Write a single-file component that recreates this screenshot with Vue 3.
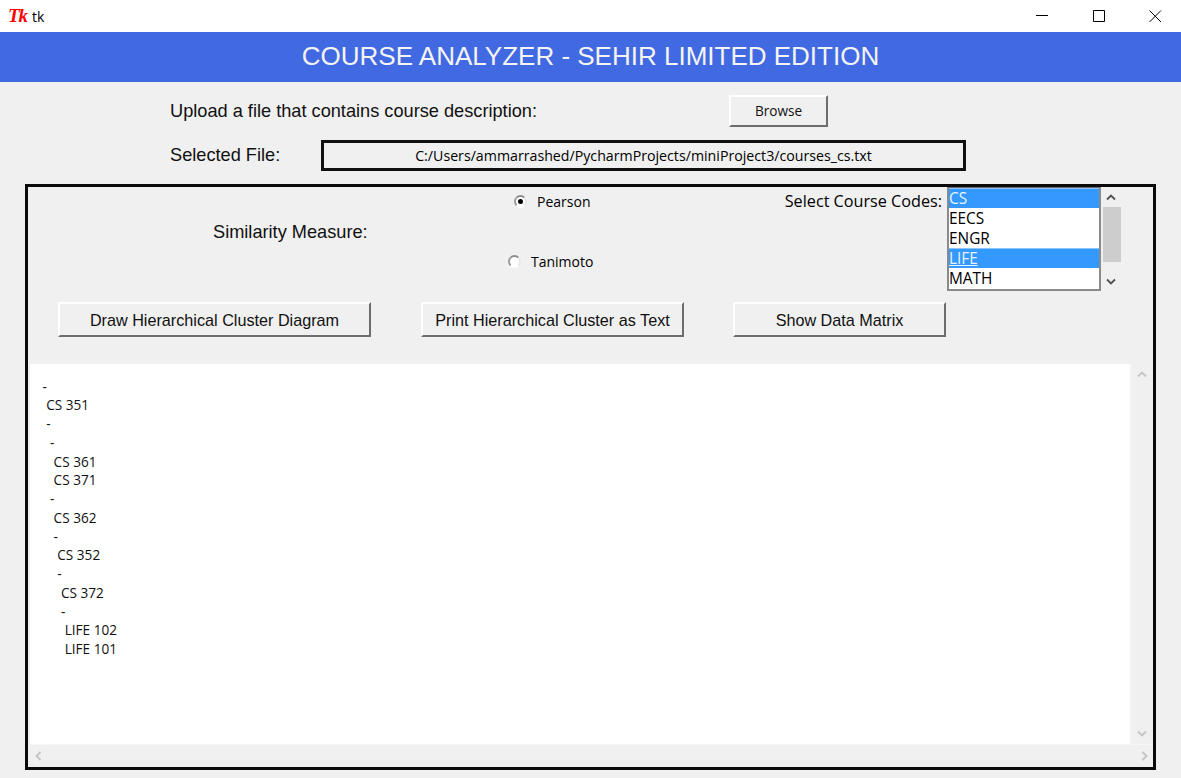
<script setup>
const courseCodes = [
  { name: 'CS', selected: true },
  { name: 'EECS' },
  { name: 'ENGR' },
  { name: 'LIFE', selected: true, active: true },
  { name: 'MATH' }
]

// depth = how many spaces tk printed before the line
const clusterLines = [
  ['-', 0], ['CS 351', 1], ['-', 1], ['-', 2], ['CS 361', 3], ['CS 371', 3],
  ['-', 2], ['CS 362', 3], ['-', 3], ['CS 352', 4], ['-', 4], ['CS 372', 5],
  ['-', 5], ['LIFE 102', 6], ['LIFE 101', 6]
]
</script>

<template>
  <div class="window">
    <header class="titlebar">
      <span class="tk-logo">Tk</span>
      <span class="tk-title">tk</span>
      <div class="window-controls">
        <svg width="13" height="13" viewBox="0 0 13 13"><path d="M0 5.5h12" stroke="#000" fill="none"/></svg>
        <svg width="13" height="13" viewBox="0 0 13 13"><path d="M.5.5h11v11H.5z" stroke="#000" fill="none"/></svg>
        <svg width="13" height="13" viewBox="0 0 13 13"><path d="M.5.5l11.5 11.5M12 .5L.5 12" stroke="#000" fill="none"/></svg>
      </div>
    </header>

    <h1 class="banner">COURSE ANALYZER - SEHIR LIMITED EDITION</h1>

    <section class="file-row upload-row">
      <span class="label upload-label">Upload a file that contains course description:</span>
      <button class="tk-btn browse">Browse</button>
    </section>

    <section class="file-row selected-row">
      <span class="label selected-label">Selected File:</span>
      <div class="file-path">C:/Users/ammarrashed/PycharmProjects/miniProject3/courses_cs.txt</div>
    </section>

    <main class="panel">
      <div class="measure-row">
        <span class="label measure-label">Similarity Measure:</span>
        <div class="radios">
          <label class="radio pearson"><span class="radio-dot checked"></span>Pearson</label>
          <label class="radio tanimoto"><span class="radio-dot"></span>Tanimoto</label>
        </div>
        <span class="codes-label">Select Course Codes:</span>
        <ul class="listbox">
          <li v-for="code in courseCodes" :key="code.name" :class="{ selected: code.selected, active: code.active }">{{ code.name }}</li>
        </ul>
        <div class="list-scroll">
          <svg width="10" height="7" viewBox="0 0 10 7"><path d="M1 5.5l4-4 4 4" stroke="#505050" stroke-width="1.8" fill="none"/></svg>
          <div class="list-thumb"></div>
          <svg width="10" height="7" viewBox="0 0 10 7"><path d="M1 1.5l4 4 4-4" stroke="#505050" stroke-width="1.8" fill="none"/></svg>
        </div>
      </div>

      <div class="actions">
        <button class="tk-btn draw">Draw Hierarchical Cluster Diagram</button>
        <button class="tk-btn print">Print Hierarchical Cluster as Text</button>
        <button class="tk-btn matrix">Show Data Matrix</button>
      </div>

      <div class="output">
        <div class="output-text">
          <div
            v-for="(line, i) in clusterLines"
            :key="i"
            class="output-line"
            :style="{ paddingLeft: line[1] * 3.7 + 'px' }"
          >{{ line[0] }}</div>
        </div>
        <div class="v-scroll">
          <svg width="10" height="7" viewBox="0 0 10 7"><path d="M1 5.5l4-4 4 4" stroke="#c4c4c4" stroke-width="1.8" fill="none"/></svg>
          <svg width="10" height="7" viewBox="0 0 10 7"><path d="M1 1.5l4 4 4-4" stroke="#c4c4c4" stroke-width="1.8" fill="none"/></svg>
        </div>
        <div class="h-scroll">
          <svg width="7" height="10" viewBox="0 0 7 10"><path d="M5.5 1l-4 4 4 4" stroke="#c4c4c4" stroke-width="1.8" fill="none"/></svg>
          <svg width="7" height="10" viewBox="0 0 7 10"><path d="M1.5 1l4 4-4 4" stroke="#c4c4c4" stroke-width="1.8" fill="none"/></svg>
        </div>
      </div>
    </main>
  </div>
</template>

<style>
html, body { margin: 0; background: #f0f0f0; }
</style>

<style scoped>
.window {
  width: 1181px;
  height: 778px;
  overflow: hidden;
  background: #f0f0f0;
  color: #000;
  font-family: "Open Sans", "Noto Sans", sans-serif;
  font-size: 14px;
}

.titlebar {
  height: 32px;
  display: flex;
  align-items: center;
  padding-left: 8px;
  background: #fff;
  box-sizing: border-box;
}
.tk-logo {
  width: 24px;
  color: #f00;
  font: italic bold 19px "Liberation Serif", serif;
  letter-spacing: -1px;
}
.tk-title { font-size: 14px; }
.window-controls {
  margin-left: auto;
  display: flex;
  gap: 43.5px;
  padding-right: 19px;
}

.banner {
  margin: 0;
  height: 50px;
  text-align: center;
  background: #4169e1;
  color: #f4f4f4;
  font: 400 26px/49px "Liberation Sans", sans-serif;
}

.label { font: 18.2px "Liberation Sans", sans-serif; color: #111; }

.file-row { display: flex; align-items: center; }
.upload-row { height: 32px; margin-top: 13px; padding-left: 170px; }
.upload-label { width: 559px; }
.browse { width: 99px; height: 32px; }
.selected-row { height: 31px; margin-top: 13px; padding-left: 170px; }
.selected-label { width: 151px; }
.file-path {
  width: 645px;
  height: 31px;
  box-sizing: border-box;
  border: 3px solid #111;
  line-height: 25px;
  font-size: 14.2px;
  text-align: center;
}

.tk-btn {
  box-sizing: border-box;
  padding: 1px 0 0;
  background: #f0f0f0;
  border: 2px solid;
  border-color: #fff #6d6d6d #6d6d6d #fff;
  color: #111;
  font-family: "Liberation Sans", sans-serif;
  font-size: 16.2px;
}
.tk-btn.browse { padding: 0 0 2px; font-family: "Open Sans", sans-serif; font-size: 13.6px; }

.panel {
  width: 1131px;
  height: 586px;
  margin: 13px 0 0 25px;
  box-sizing: border-box;
  border: 3px solid #0a0a0a;
}

.measure-row { display: flex; height: 115px; }
.measure-label { margin: 35px 0 0 185px; width: 290px; height: 24px; }
.radios { width: 280px; }
.radio {
  display: flex;
  align-items: center;
  gap: 10px;
  height: 20px;
}
.pearson { margin: 4px 0 0 11px; }
.tanimoto { margin: 40px 0 0 5px; }
.radio-dot {
  width: 13px;
  height: 13px;
  box-sizing: border-box;
  border-radius: 50%;
  border: 2px solid;
  border-color: #8c8c8c #e8e8e8 #fff #9a9a9a;
  background: #fff;
  display: flex;
  align-items: center;
  justify-content: center;
}
.radio-dot.checked::after {
  content: '';
  width: 5px;
  height: 5px;
  border-radius: 50%;
  background: #000;
}
.codes-label { width: 159px; padding-top: 4px; white-space: nowrap; font-size: 16.2px; line-height: 20px; text-align: right; box-sizing: border-box; }

.listbox {
  list-style: none;
  margin: 0 0 0 5px;
  padding: 0;
  width: 154px;
  height: 104px;
  box-sizing: border-box;
  background: #fff;
  border: 2px solid #8a8a8a;
  border-top: 1px solid #6a6a6a;
  font-size: 15.4px;
}
.listbox li { height: 20px; line-height: 21px; }
.listbox li.selected { background: #3399ff; color: #e8f3ff; box-shadow: inset 0 1px #8cc4ff; }
.listbox li.active {
  text-decoration: underline;
  text-decoration-thickness: 1px;
  text-underline-offset: 1px;
}

.list-scroll {
  width: 20px;
  height: 104px;
  display: flex;
  flex-direction: column;
  align-items: center;
  padding-left: 2px;
  box-sizing: border-box;
}
.list-scroll svg { margin-top: 7px; margin-left: -3px; }
.list-thumb { width: 18px; height: 55px; margin-top: 6px; background: #cdcdcd; }
.list-scroll svg:last-child { margin-top: 16px; }

.actions { display: flex; height: 35px; padding-left: 30px; }
.draw { width: 313px; }
.print { width: 263px; margin-left: 50px; }
.matrix { width: 213px; margin-left: 49px; }

.output {
  display: grid;
  grid-template-columns: 1101px 1fr;
  grid-template-rows: 380px 1fr;
  height: 403px;
  margin: 27px 0 0 2px;
}
.output-text {
  grid-column: 1;
  grid-row: 1;
  background: #fff;
  border-right: 2px solid #f7f7f7;
  box-sizing: border-box;
  padding: 13.5px 0 0 12.5px;
}
.output-line { height: 18.75px; line-height: 18.75px; font-size: 13.6px; color: #111; }

.v-scroll {
  grid-column: 2;
  grid-row: 1;
  display: flex;
  flex-direction: column;
  justify-content: space-between;
  align-items: center;
  padding: 7px 0;
  margin-right: 1px;
}
.h-scroll {
  grid-column: 1 / 3;
  grid-row: 2;
  display: flex;
  justify-content: space-between;
  align-items: center;
  padding: 0 5px;
  border-top: 1px solid #f7f7f7;
}
</style>
